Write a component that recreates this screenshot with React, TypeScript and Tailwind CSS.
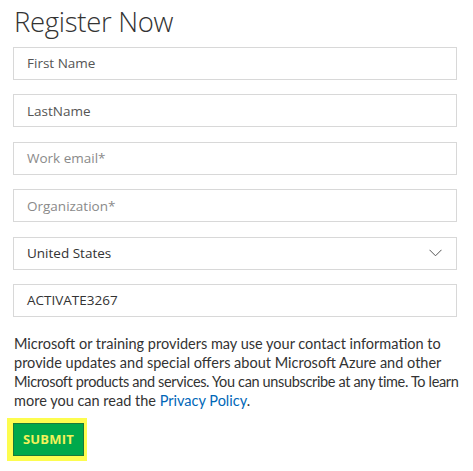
import React from "react";

const fields = [
  { placeholder: "First Name", tone: "text-[#555]" },
  { placeholder: "LastName", tone: "text-[#555]" },
  { placeholder: "Work email*", tone: "text-[#8a8a8a]" },
  { placeholder: "Organization*", tone: "text-[#8a8a8a]" },
];

export default function App() {
  return (
    <div className="w-[473px] h-[471px] bg-white font-['Open_Sans',sans-serif] text-[#333]">
      <div className="pl-[13px] pt-[3px]">
        <h1 className="text-[27.5px] font-light leading-[37px] text-[#333] pl-[1px] tracking-[-0.3px]">
          Register Now
        </h1>

        <div className="mt-[7px] w-[444px] flex flex-col gap-[14.4px]">
          {fields.map((f) => (
            <div
              key={f.placeholder}
              className={`h-[33px] border border-[#d8d8d8] flex items-center pl-[13px] text-[13.5px] ${f.tone}`}
            >
              {f.placeholder}
            </div>
          ))}

          <div className="h-[33px] border border-[#d8d8d8] flex items-center justify-between pl-[13px] pr-[14px] text-[13.5px] text-[#333]">
            <span>United States</span>
            <svg width="13" height="8" viewBox="0 0 13 8" fill="none" stroke="#555" strokeWidth="1">
              <path d="M0.5 0.8 L6.5 6.8 L12.5 0.8" />
            </svg>
          </div>

          <div className="h-[33px] border border-[#d8d8d8] flex items-center pl-[13px] text-[13.5px] text-[#333]">
            ACTIVATE3267
          </div>
        </div>

        <p className="mt-[17px] w-[458px] whitespace-nowrap font-['Lato',sans-serif] text-[14.5px] leading-[19px] text-[#333] pl-[1px]">
          Microsoft or training providers may use your contact information to
          <br />
          provide updates and special offers about Microsoft Azure and other
          <br />
          <span className="tracking-[-0.35px]">
            Microsoft products and services. You can unsubscribe at any time. To learn
          </span>
          <br />
          more you can read the <a className="text-[#0067b8]">Privacy Policy</a>.
        </p>

        <div className="mt-[8px] -ml-[6px] inline-flex bg-[#fdfd4f] pl-[6px] pr-[3px] py-[5px]">
          <button className="w-[71px] h-[33px] bg-[#00a94b] border border-[#1b7a3a] text-[#f2f25a] text-[13px] font-bold tracking-[0.2px]">
            SUBMIT
          </button>
        </div>
      </div>
    </div>
  );
}
